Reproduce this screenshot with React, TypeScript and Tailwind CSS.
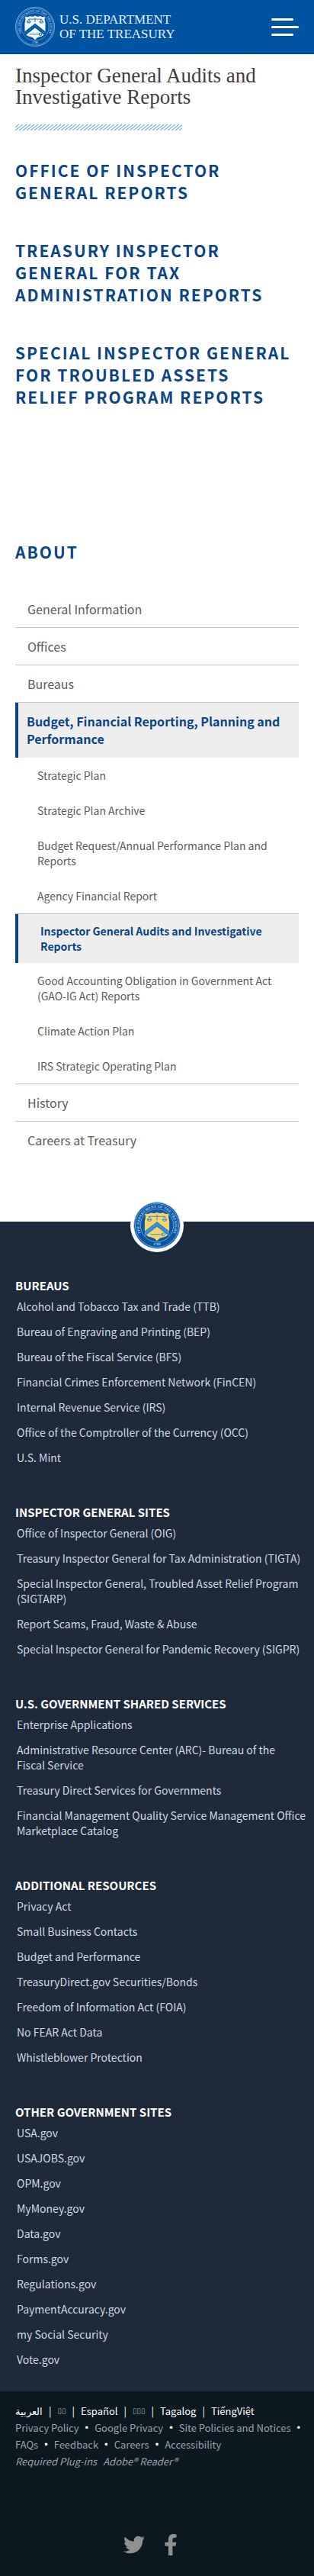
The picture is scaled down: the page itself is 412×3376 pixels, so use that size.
import { FaFacebookF, FaTwitter } from "react-icons/fa";

const reports = [
  "Office of Inspector General Reports",
  "Treasury Inspector General for Tax Administration Reports",
  "Special Inspector General for Troubled Assets Relief Program Reports",
];

const planning = [
  "Strategic Plan",
  "Strategic Plan Archive",
  "Budget Request/Annual Performance Plan and Reports",
  "Agency Financial Report",
  "Inspector General Audits and Investigative Reports",
  "Good Accounting Obligation in Government Act (GAO-IG Act) Reports",
  "Climate Action Plan",
  "IRS Strategic Operating Plan",
];

const footerSections = [
  {
    title: "BUREAUS",
    links: [
      "Alcohol and Tobacco Tax and Trade (TTB)",
      "Bureau of Engraving and Printing (BEP)",
      "Bureau of the Fiscal Service (BFS)",
      "Financial Crimes Enforcement Network (FinCEN)",
      "Internal Revenue Service (IRS)",
      "Office of the Comptroller of the Currency (OCC)",
      "U.S. Mint",
    ],
  },
  {
    title: "INSPECTOR GENERAL SITES",
    links: [
      "Office of Inspector General (OIG)",
      "Treasury Inspector General for Tax Administration (TIGTA)",
      "Special Inspector General, Troubled Asset Relief Program (SIGTARP)",
      "Report Scams, Fraud, Waste & Abuse",
      "Special Inspector General for Pandemic Recovery (SIGPR)",
    ],
  },
  {
    title: "U.S. GOVERNMENT SHARED SERVICES",
    links: [
      "Enterprise Applications",
      "Administrative Resource Center (ARC)- Bureau of the\nFiscal Service",
      "Treasury Direct Services for Governments",
      "Financial Management Quality Service Management Office\nMarketplace Catalog",
    ],
  },
  {
    title: "ADDITIONAL RESOURCES",
    links: [
      "Privacy Act",
      "Small Business Contacts",
      "Budget and Performance",
      "TreasuryDirect.gov Securities/Bonds",
      "Freedom of Information Act (FOIA)",
      "No FEAR Act Data",
      "Whistleblower Protection",
    ],
  },
  {
    title: "OTHER GOVERNMENT SITES",
    links: [
      "USA.gov",
      "USAJOBS.gov",
      "OPM.gov",
      "MyMoney.gov",
      "Data.gov",
      "Forms.gov",
      "Regulations.gov",
      "PaymentAccuracy.gov",
      "my Social Security",
      "Vote.gov",
    ],
  },
];

const languages = [
  { text: "العربية", lang: "ar" },
  { text: "▯▯", lang: "zh" },
  { text: "Español", lang: "es" },
  { text: "▯▯▯", lang: "ko" },
  { text: "Tagalog", lang: "tl" },
  { text: "TiếngViệt", lang: "vi" },
];

const policies = [
  "Privacy Policy",
  "Google Privacy",
  "Site Policies and Notices",
  "FAQs",
  "Feedback",
  "Careers",
  "Accessibility",
];

type SealProps = {
  id: string;
  className: string;
  field: string;
  ring: string;
  shield: string;
  mark: string;
};

function Seal({ id, className, field, ring, shield, mark }: SealProps) {
  return (
    <svg viewBox="0 0 100 100" className={className} aria-hidden="true">
      <defs>
        <path id={id + "-top"} d="M24 77A37.500 37.500 0 1 1 76 77" />
        <path id={id + "-bottom"} d="M22 82A43 43 0 0 0 78 82" />
      </defs>
      <circle cx="50" cy="50" r="49" fill={field} stroke={ring} strokeWidth="1.500" />
      <circle cx="50" cy="50" r="46" fill="none" stroke={ring} strokeWidth="1" />
      <circle cx="50" cy="50" r="35" fill="none" stroke={ring} strokeWidth="1" />
      <text fill={ring} fontSize="8" fontWeight="700" fontFamily="Liberation Serif, serif">
        <textPath href={"#" + id + "-top"} startOffset="50%" textAnchor="middle">
          THE DEPARTMENT OF THE TREASURY
        </textPath>
      </text>
      <text fill={ring} fontSize="8" fontWeight="700" fontFamily="Liberation Serif, serif">
        <textPath href={"#" + id + "-bottom"} startOffset="50%" textAnchor="middle">
          1789
        </textPath>
      </text>
      <path
        d="M25 25Q32 27 37 23Q44 26 50 22Q56 26 63 23Q68 27 75 25Q73 33 76 41V64Q74 73 63 75Q54 77 50 83Q46 77 37 75Q26 73 24 64V41Q27 33 25 25Z"
        fill={shield}
      />
      <path d="M24 62L50 42L76 62V73L50 53L24 73Z" fill={mark} />
      <path d="M24 67L50 47L76 67" fill="none" stroke={ring} strokeWidth="1.500" strokeDasharray="2 4" />
      <g fill="none" stroke={mark} strokeWidth="1.500">
        <path d="M33 31H67M50 27V39M34 31L30 38M34 31L38 38M66 31L62 38M66 31L70 38" />
        <path d="M29 38Q34 44 39 38ZM61 38Q66 44 71 38Z" />
        <path d="M36 69H61M61 66V72M64 66A3 3 0 1 1 64 72A3 3 0 1 1 64 66" />
      </g>
    </svg>
  );
}

export default function App() {
  return (
    <div className="bg-white font-['Noto_Sans_CJK_SC','Noto_Sans',sans-serif] text-[#5b5b5b]">
      <header className="flex h-[71px] items-center justify-between border-b border-[#004585] bg-[#0053a1] px-5">
        <a href="#home" className="flex items-center gap-1.5 text-[#e4f1ff]">
          <Seal
            id="header-seal"
            className="h-[52px] w-[52px]"
            field="#0053a1"
            ring="#a5c9ee"
            shield="#f2f8ff"
            mark="#0053a1"
          />
          <span className="font-['Liberation_Serif',serif] text-[17px] leading-[19px]">
            U.S. DEPARTMENT
            <br />
            OF THE TREASURY
          </span>
        </a>
        <button type="button" aria-label="Menu" className="flex w-9 flex-col gap-[7px]">
          <span className="h-[3px] w-[29px] rounded-sm bg-white" />
          <span className="h-[3px] w-9 rounded-sm bg-white" />
          <span className="h-[3px] w-[29px] rounded-sm bg-white" />
        </button>
      </header>

      <main className="px-5 pt-[14px]">
        <h1 className="font-['Liberation_Serif',serif] text-[27px] leading-7 text-[#3d3d3d]">
          Inspector General Audits and Investigative Reports
        </h1>
        <svg className="mt-[21px] block h-[9px] w-[219px]" aria-hidden="true">
          <defs>
            <pattern id="hatch" width="5" height="9" patternUnits="userSpaceOnUse">
              <path d="M-5 9L5 1M0 9L10 1M-10 9L0 1" stroke="#7db0dc" strokeWidth="1.300" />
            </pattern>
          </defs>
          <rect width="219" height="9" fill="url(#hatch)" />
        </svg>

        <div className="mt-[38px] flex flex-col gap-[47px] pr-2">
          {reports.map((r) => (
            <h2 key={r} className="text-[21px] font-bold uppercase leading-[29px] tracking-[2px] text-[#0b4484]">
              <a href="#report">{r}</a>
            </h2>
          ))}
        </div>

        <nav aria-label="About" className="mt-[174px]">
          <h2 className="text-[21px] font-bold leading-[29px] tracking-[2px] text-[#0b4484]">ABOUT</h2>
          <ul className="mt-9 text-base leading-[22px]">
            {["General Information", "Offices", "Bureaus"].map((t) => (
              <li key={t} className="border-b border-[#c4c4c4]">
                <a href="#about" className="block py-[13px] pl-4">
                  {t}
                </a>
              </li>
            ))}
            <li>
              <a
                href="#budget"
                className="block border-l-4 border-[#0b4484] bg-[#eeeeee] px-[11px] py-[13px] font-bold leading-[23px] text-[#0b4484]"
              >
                Budget, Financial Reporting, Planning and Performance
              </a>
              <ul className="text-sm leading-5">
                {planning.map((t, i) =>
                  i === 4 ? (
                    <li key={t} className="border-t border-[#c4c4c4]">
                      <a
                        href="#plan"
                        aria-current="page"
                        className="block border-l-4 border-[#0b4484] bg-[#eeeeee] py-3 pl-[29px] pr-4 font-bold text-[#0b4484]"
                      >
                        {t}
                      </a>
                    </li>
                  ) : (
                    <li key={t}>
                      <a href="#plan" className="block py-[13px] pl-[29px] pr-4">
                        {t}
                      </a>
                    </li>
                  ),
                )}
              </ul>
            </li>
            {["History", "Careers at Treasury"].map((t) => (
              <li key={t} className="border-t border-[#c4c4c4]">
                <a href="#about" className="block py-[13px] pl-4">
                  {t}
                </a>
              </li>
            ))}
          </ul>
        </nav>
      </main>

      <footer className="mt-[83px]">
        <div className="bg-[#1e2a3a] pb-[19px]">
          <div className="flex justify-center">
            <div className="-mt-[30px] rounded-full bg-white p-1">
              <Seal
                id="footer-seal"
                className="h-[62px] w-[62px]"
                field="#0a55a0"
                ring="#a9cdf0"
                shield="#f3d56b"
                mark="#3187cc"
              />
            </div>
          </div>
          <div className="mt-8 flex flex-col gap-[37px] pl-5 pr-1">
            {footerSections.map((s) => (
              <section key={s.title}>
                <h3 className="text-[15px] font-semibold leading-6 text-white">{s.title}</h3>
                <ul className="mt-[5px] pl-0.5 text-sm leading-5 text-[#cfd8e0]">
                  {s.links.map((l) => (
                    <li key={l} className="mb-[13px] whitespace-pre-line">
                      <a href="#site">{l}</a>
                    </li>
                  ))}
                </ul>
              </section>
            ))}
          </div>
        </div>

        <div className="bg-[#0c1820] pb-[27px] pl-5 pr-1 pt-[15px] text-[13px] leading-[22px] text-[#9aa1a6]">
          <ul className="flex flex-wrap text-white">
            {languages.map((l, i) => (
              <li key={l.lang} className="flex">
                {i > 0 && <span className="px-2">|</span>}
                <a
                  href="#language"
                  lang={l.lang}
                  className={l.text.startsWith("▯") ? "font-['DejaVu_Sans',sans-serif] text-[10px] text-[#9aa1a6]" : ""}
                >
                  {l.text}
                </a>
              </li>
            ))}
          </ul>
          <ul className="flex flex-wrap">
            {policies.map((p, i) => (
              <li key={p} className="flex">
                <a href="#policy">{p}</a>
                {i < policies.length - 1 && (
                  <span className="px-2 font-['Liberation_Sans',sans-serif] text-white">•</span>
                )}
              </li>
            ))}
          </ul>
          <p className="flex gap-2 italic">
            <span>Required Plug-ins</span>
            <a href="#reader">Adobe® Reader®</a>
          </p>
          <div className="mt-[84px] flex items-center justify-center gap-5 pr-7 text-[28px] text-[#8f9191]">
            <a href="#twitter" aria-label="Twitter">
              <FaTwitter />
            </a>
            <a href="#facebook" aria-label="Facebook">
              <FaFacebookF />
            </a>
          </div>
        </div>
      </footer>
    </div>
  );
}
